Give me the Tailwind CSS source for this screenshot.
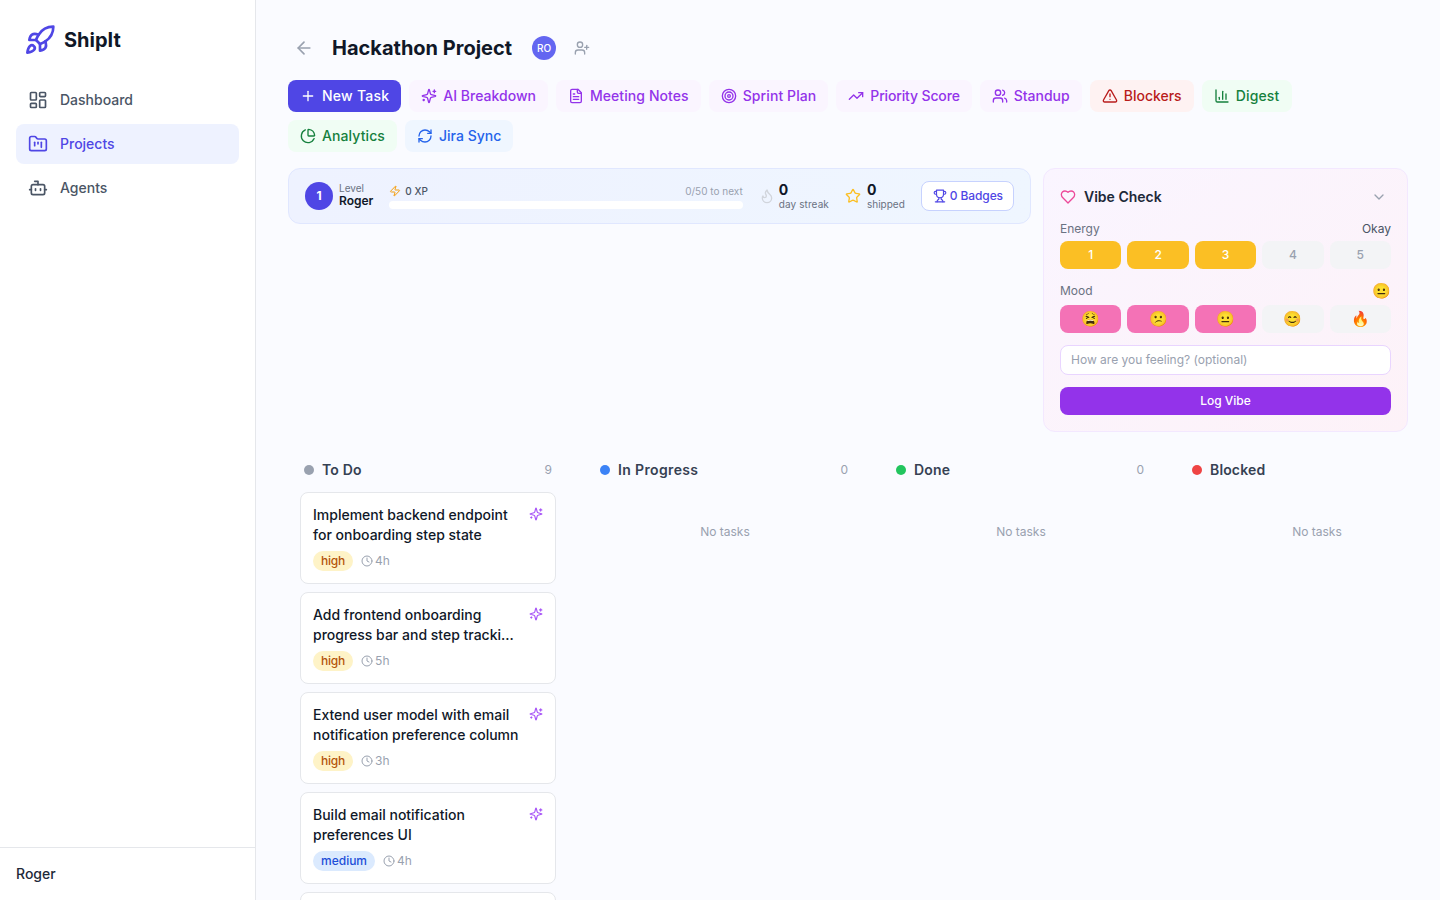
<!DOCTYPE html>
<html lang="en">
<head>
    <meta charset="UTF-8">
    <meta name="viewport" content="width=device-width, initial-scale=1.0">
    <title>ShipIt</title>
    <script src="https://cdn.jsdelivr.net/npm/@tailwindcss/browser@4"></script>
</head>
<body class="h-screen overflow-hidden bg-[#fafbff] text-gray-900 font-['Inter',sans-serif]">
    <svg class="hidden">
        <defs>
            <symbol id="i-sparkles" viewBox="0 0 24 24"><path d="M9.937 15.5A2 2 0 0 0 8.5 14.063l-6.135-1.582a.5.5 0 0 1 0-.962L8.5 9.936A2 2 0 0 0 9.937 8.5l1.582-6.135a.5.5 0 0 1 .963 0L14.063 8.5A2 2 0 0 0 15.5 9.937l6.135 1.581a.5.5 0 0 1 0 .964L15.5 14.063a2 2 0 0 0-1.437 1.437l-1.582 6.135a.5.5 0 0 1-.963 0z"/><path d="M20 3v4"/><path d="M22 5h-4"/><path d="M4 17v2"/><path d="M5 18H3"/></symbol>
            <symbol id="i-clock" viewBox="0 0 24 24"><circle cx="12" cy="12" r="10"/><polyline points="12 6 12 12 16 14"/></symbol>
        </defs>
    </svg>

    <div class="flex h-screen">
        <!-- Sidebar -->
        <aside class="w-64 shrink-0 bg-white border-r border-gray-200 flex flex-col">
            <div class="flex items-center gap-2 h-20 px-6">
                <svg class="w-8 h-8 text-[#4f46e5]" viewBox="0 0 24 24" fill="none" stroke="currentColor" stroke-width="2" stroke-linecap="round" stroke-linejoin="round"><path d="M4.5 16.5c-1.5 1.26-2 5-2 5s3.74-.5 5-2c.71-.84.7-2.13-.09-2.91a2.18 2.18 0 0 0-2.91-.09z"/><path d="m12 15-3-3a22 22 0 0 1 2-3.95A12.88 12.88 0 0 1 22 2c0 2.72-.78 7.5-6 11a22.35 22.35 0 0 1-4 2z"/><path d="M9 12H4s.55-3.03 2-4c1.62-1.08 5 0 5 0"/><path d="M12 15v5s3.03-.55 4-2c1.08-1.62 0-5 0-5"/></svg>
                <span class="text-xl font-bold">ShipIt</span>
            </div>
            <nav class="flex-1 px-4 flex flex-col gap-1">
                <a class="flex items-center gap-3 h-10 px-3 rounded-lg text-sm font-medium text-gray-600">
                    <svg class="w-5 h-5" viewBox="0 0 24 24" fill="none" stroke="currentColor" stroke-width="2" stroke-linecap="round" stroke-linejoin="round"><rect width="7" height="9" x="3" y="3" rx="1"/><rect width="7" height="5" x="14" y="3" rx="1"/><rect width="7" height="9" x="14" y="12" rx="1"/><rect width="7" height="5" x="3" y="16" rx="1"/></svg>
                    Dashboard
                </a>
                <a class="flex items-center gap-3 h-10 px-3 rounded-lg text-sm font-medium bg-[#eef2ff] text-[#4f46e5]">
                    <svg class="w-5 h-5" viewBox="0 0 24 24" fill="none" stroke="currentColor" stroke-width="2" stroke-linecap="round" stroke-linejoin="round"><path d="M4 20h16a2 2 0 0 0 2-2V8a2 2 0 0 0-2-2h-7.93a2 2 0 0 1-1.66-.9l-.82-1.2A2 2 0 0 0 7.93 3H4a2 2 0 0 0-2 2v13c0 1.1.9 2 2 2Z"/><path d="M8 10v4"/><path d="M12 10v2"/><path d="M16 10v6"/></svg>
                    Projects
                </a>
                <a class="flex items-center gap-3 h-10 px-3 rounded-lg text-sm font-medium text-gray-600">
                    <svg class="w-5 h-5" viewBox="0 0 24 24" fill="none" stroke="currentColor" stroke-width="2" stroke-linecap="round" stroke-linejoin="round"><path d="M12 8V4H8"/><rect width="16" height="12" x="4" y="8" rx="2"/><path d="M2 14h2"/><path d="M20 14h2"/><path d="M15 13v2"/><path d="M9 13v2"/></svg>
                    Agents
                </a>
            </nav>
            <div class="border-t border-gray-200 h-[53px] px-4 flex items-center text-sm font-medium text-gray-800">Roger</div>
        </aside>

        <!-- Main -->
        <main class="flex-1 min-w-0 overflow-hidden px-8 pt-8">
            <!-- Header -->
            <div class="flex items-center h-8 mb-4">
                <button class="p-1.5 text-gray-400">
                    <svg class="w-5 h-5" viewBox="0 0 24 24" fill="none" stroke="currentColor" stroke-width="2" stroke-linecap="round" stroke-linejoin="round"><path d="m12 19-7-7 7-7"/><path d="M19 12H5"/></svg>
                </button>
                <h1 class="ml-3 text-xl font-bold">Hackathon Project</h1>
                <div class="ml-5 w-6 h-6 rounded-full bg-[#6366f1] text-white text-[10px] font-medium flex items-center justify-center">RO</div>
                <button class="ml-[18px] text-gray-400">
                    <svg class="w-4 h-4" viewBox="0 0 24 24" fill="none" stroke="currentColor" stroke-width="2" stroke-linecap="round" stroke-linejoin="round"><path d="M16 21v-2a4 4 0 0 0-4-4H6a4 4 0 0 0-4 4v2"/><circle cx="9" cy="7" r="4"/><line x1="19" x2="19" y1="8" y2="14"/><line x1="22" x2="16" y1="11" y2="11"/></svg>
                </button>
            </div>

            <!-- Actions -->
            <div class="flex flex-col gap-2 mb-4">
                <div class="flex gap-2">
                    <button class="flex items-center gap-1.5 h-8 px-3 rounded-lg text-sm font-medium tracking-[0.25px] bg-[#4f46e5] text-white">
                        <svg class="w-4 h-4" viewBox="0 0 24 24" fill="none" stroke="currentColor" stroke-width="2" stroke-linecap="round" stroke-linejoin="round"><path d="M5 12h14"/><path d="M12 5v14"/></svg>
                        New Task
                    </button>
                    <button class="flex items-center gap-1.5 h-8 px-3 rounded-lg text-sm font-medium bg-[#faf5ff] text-[#9333ea]">
                        <svg class="w-4 h-4" fill="none" stroke="currentColor" stroke-width="2" stroke-linecap="round" stroke-linejoin="round"><use href="#i-sparkles"/></svg>
                        AI Breakdown
                    </button>
                    <button class="flex items-center gap-1.5 h-8 px-3 rounded-lg text-sm font-medium tracking-[0.08px] bg-[#faf5ff] text-[#9333ea]">
                        <svg class="w-4 h-4" viewBox="0 0 24 24" fill="none" stroke="currentColor" stroke-width="2" stroke-linecap="round" stroke-linejoin="round"><path d="M15 2H6a2 2 0 0 0-2 2v16a2 2 0 0 0 2 2h12a2 2 0 0 0 2-2V7Z"/><path d="M14 2v4a2 2 0 0 0 2 2h4"/><path d="M10 9H8"/><path d="M16 13H8"/><path d="M16 17H8"/></svg>
                        Meeting Notes
                    </button>
                    <button class="flex items-center gap-1.5 h-8 px-3 rounded-lg text-sm font-medium tracking-[0.09px] bg-[#faf5ff] text-[#9333ea]">
                        <svg class="w-4 h-4" viewBox="0 0 24 24" fill="none" stroke="currentColor" stroke-width="2" stroke-linecap="round" stroke-linejoin="round"><circle cx="12" cy="12" r="10"/><circle cx="12" cy="12" r="6"/><circle cx="12" cy="12" r="2"/></svg>
                        Sprint Plan
                    </button>
                    <button class="flex items-center gap-1.5 h-8 px-3 rounded-lg text-sm font-medium tracking-[-0.15px] bg-[#faf5ff] text-[#9333ea]">
                        <svg class="w-4 h-4" viewBox="0 0 24 24" fill="none" stroke="currentColor" stroke-width="2" stroke-linecap="round" stroke-linejoin="round"><polyline points="22 7 13.5 15.5 8.5 10.5 2 17"/><polyline points="16 7 22 7 22 13"/></svg>
                        Priority Score
                    </button>
                    <button class="flex items-center gap-1.5 h-8 px-3 rounded-lg text-sm font-medium bg-[#faf5ff] text-[#9333ea]">
                        <svg class="w-4 h-4" viewBox="0 0 24 24" fill="none" stroke="currentColor" stroke-width="2" stroke-linecap="round" stroke-linejoin="round"><path d="M16 21v-2a4 4 0 0 0-4-4H6a4 4 0 0 0-4 4v2"/><circle cx="9" cy="7" r="4"/><path d="M22 21v-2a4 4 0 0 0-3-3.87"/><path d="M16 3.13a4 4 0 0 1 0 7.75"/></svg>
                        Standup
                    </button>
                    <button class="flex items-center gap-1.5 h-8 px-3 rounded-lg text-sm font-medium bg-[#fef2f2] text-[#b91c1c]">
                        <svg class="w-4 h-4" viewBox="0 0 24 24" fill="none" stroke="currentColor" stroke-width="2" stroke-linecap="round" stroke-linejoin="round"><path d="m21.73 18-8-14a2 2 0 0 0-3.48 0l-8 14A2 2 0 0 0 4 21h16a2 2 0 0 0 1.73-3"/><path d="M12 9v4"/><path d="M12 17h.01"/></svg>
                        Blockers
                    </button>
                    <button class="flex items-center gap-1.5 h-8 px-3 rounded-lg text-sm font-medium tracking-[0.17px] bg-[#f0fdf4] text-[#15803d]">
                        <svg class="w-4 h-4" viewBox="0 0 24 24" fill="none" stroke="currentColor" stroke-width="2" stroke-linecap="round" stroke-linejoin="round"><path d="M3 3v16a2 2 0 0 0 2 2h16"/><path d="M18 17V9"/><path d="M13 17V5"/><path d="M8 17v-3"/></svg>
                        Digest
                    </button>
                </div>
                <div class="flex gap-2">
                    <button class="flex items-center gap-1.5 h-8 px-3 rounded-lg text-sm font-medium tracking-[0.1px] bg-[#f0fdf4] text-[#15803d]">
                        <svg class="w-4 h-4" viewBox="0 0 24 24" fill="none" stroke="currentColor" stroke-width="2" stroke-linecap="round" stroke-linejoin="round"><path d="M21 12c.552 0 1.005-.449.95-.998a10 10 0 0 0-8.953-8.951c-.55-.055-.998.398-.998.95v8a1 1 0 0 0 1 1z"/><path d="M21.21 15.89A10 10 0 1 1 8 2.83"/></svg>
                        Analytics
                    </button>
                    <button class="flex items-center gap-1.5 h-8 px-3 rounded-lg text-sm font-medium bg-[#eff6ff] text-[#2563eb]">
                        <svg class="w-4 h-4" viewBox="0 0 24 24" fill="none" stroke="currentColor" stroke-width="2" stroke-linecap="round" stroke-linejoin="round"><path d="M3 12a9 9 0 0 1 9-9 9.75 9.75 0 0 1 6.74 2.74L21 8"/><path d="M21 3v5h-5"/><path d="M21 12a9 9 0 0 1-9 9 9.75 9.75 0 0 1-6.74-2.74L3 16"/><path d="M8 16H3v5"/></svg>
                        Jira Sync
                    </button>
                </div>
            </div>

            <!-- Level bar + vibe check -->
            <div class="flex items-start gap-3 mb-4">
                <div class="flex-1 min-w-0 h-14 px-4 flex items-center gap-4 rounded-xl border border-[#e0e7ff] bg-linear-to-r from-[#eef2ff] to-[#eff6ff]">
                    <div class="flex items-center gap-1.5">
                        <div class="w-7 h-7 rounded-full bg-[#4f46e5] text-white text-xs font-bold flex items-center justify-center">1</div>
                        <div>
                            <div class="text-[10px] leading-3 text-gray-500 -mt-px">Level</div>
                            <div class="text-xs leading-4 font-semibold text-gray-900 -mt-px">Roger</div>
                        </div>
                    </div>
                    <div class="flex-1 min-w-0">
                        <div class="flex items-center justify-between mb-0.5">
                            <span class="flex items-center gap-1 text-[10px] leading-4 font-medium text-gray-600">
                                <svg class="w-3 h-3 text-[#f59e0b]" viewBox="0 0 24 24" fill="none" stroke="currentColor" stroke-width="2" stroke-linecap="round" stroke-linejoin="round"><path d="M4 14a1 1 0 0 1-.78-1.63l9.9-10.2a.5.5 0 0 1 .86.46l-1.92 6.02A1 1 0 0 0 13 10h7a1 1 0 0 1 .78 1.63l-9.9 10.2a.5.5 0 0 1-.86-.46l1.92-6.02A1 1 0 0 0 11 14z"/></svg>
                                0 XP
                            </span>
                            <span class="text-[10px] leading-4 text-gray-400">0/50 to next</span>
                        </div>
                        <div class="h-2 rounded-full bg-white"></div>
                    </div>
                    <div class="flex items-center gap-1">
                        <svg class="w-4 h-4 text-gray-300" viewBox="0 0 24 24" fill="none" stroke="currentColor" stroke-width="2" stroke-linecap="round" stroke-linejoin="round"><path d="M8.5 14.5A2.5 2.5 0 0 0 11 12c0-1.38-.5-2-1-3-1.072-2.143-.224-4.054 2-6 .5 2.5 2 4.9 4 6.5 2 1.6 3 3.5 3 5.5a7 7 0 1 1-14 0c0-1.153.433-2.294 1-3a2.5 2.5 0 0 0 2.5 2.5z"/></svg>
                        <div>
                            <div class="text-sm leading-4 font-bold text-gray-900">0</div>
                            <div class="text-[10px] leading-3 tracking-[0.1px] text-gray-500">day streak</div>
                        </div>
                    </div>
                    <div class="flex items-center gap-1.5">
                        <svg class="w-4 h-4 text-[#fbbf24]" viewBox="0 0 24 24" fill="none" stroke="currentColor" stroke-width="2" stroke-linecap="round" stroke-linejoin="round"><path d="M11.525 2.295a.53.53 0 0 1 .95 0l2.31 4.679a2.123 2.123 0 0 0 1.595 1.16l5.166.756a.53.53 0 0 1 .294.904l-3.736 3.638a2.123 2.123 0 0 0-.611 1.878l.882 5.14a.53.53 0 0 1-.771.56l-4.618-2.428a2.122 2.122 0 0 0-1.973 0L6.396 21.01a.53.53 0 0 1-.77-.56l.881-5.139a2.122 2.122 0 0 0-.611-1.879L2.16 9.795a.53.53 0 0 1 .294-.906l5.165-.755a2.122 2.122 0 0 0 1.597-1.16z"/></svg>
                        <div>
                            <div class="text-sm leading-4 font-bold text-gray-900">0</div>
                            <div class="text-[10px] leading-3 text-gray-500">shipped</div>
                        </div>
                    </div>
                    <button class="flex items-center gap-[3px] h-[30px] pl-[11px] pr-2.5 rounded-lg border border-[#c7d2fe] bg-white text-xs font-medium tracking-[-0.1px] text-[#4f46e5]">
                        <svg class="w-3.5 h-3.5" viewBox="0 0 24 24" fill="none" stroke="currentColor" stroke-width="2" stroke-linecap="round" stroke-linejoin="round"><path d="M6 9H4.5a2.5 2.5 0 0 1 0-5H6"/><path d="M18 9h1.5a2.5 2.5 0 0 0 0-5H18"/><path d="M4 22h16"/><path d="M10 14.66V17c0 .55-.47.98-.97 1.21C7.85 18.75 7 20.24 7 22"/><path d="M14 14.66V17c0 .55.47.98.97 1.21C16.15 18.75 17 20.24 17 22"/><path d="M18 2H6v7a6 6 0 0 0 12 0V2Z"/></svg>
                        0 Badges
                    </button>
                </div>

                <div class="w-[365px] shrink-0 p-4 rounded-xl border border-[#f3e8ff] bg-linear-to-br from-[#faf5ff] to-[#fdf2f8]">
                    <div class="flex items-center justify-between h-6 mb-3">
                        <div class="flex items-center gap-2 text-sm font-semibold text-gray-800">
                            <svg class="w-4 h-4 text-[#ec4899]" viewBox="0 0 24 24" fill="none" stroke="currentColor" stroke-width="2" stroke-linecap="round" stroke-linejoin="round"><path d="M19 14c1.49-1.46 3-3.21 3-5.5A5.5 5.5 0 0 0 16.5 3c-1.76 0-3 .5-4.5 2-1.5-1.5-2.74-2-4.5-2A5.5 5.5 0 0 0 2 8.5c0 2.3 1.5 4.05 3 5.5l7 7Z"/></svg>
                            Vibe Check
                        </div>
                        <svg class="w-4 h-4 text-gray-400 mr-1" viewBox="0 0 24 24" fill="none" stroke="currentColor" stroke-width="2" stroke-linecap="round" stroke-linejoin="round"><path d="m6 9 6 6 6-6"/></svg>
                    </div>
                    <div class="flex justify-between text-xs leading-4 mb-1">
                        <span class="text-gray-500">Energy</span>
                        <span class="text-gray-600">Okay</span>
                    </div>
                    <div class="flex gap-1.5 mb-3">
                        <div class="flex-1 h-7 rounded-lg bg-[#fbbf24] text-white text-xs font-medium flex items-center justify-center">1</div>
                        <div class="flex-1 h-7 rounded-lg bg-[#fbbf24] text-white text-xs font-medium flex items-center justify-center">2</div>
                        <div class="flex-1 h-7 rounded-lg bg-[#fbbf24] text-white text-xs font-medium flex items-center justify-center">3</div>
                        <div class="flex-1 h-7 rounded-lg bg-gray-100 text-gray-400 text-xs font-medium flex items-center justify-center">4</div>
                        <div class="flex-1 h-7 rounded-lg bg-gray-100 text-gray-400 text-xs font-medium flex items-center justify-center">5</div>
                    </div>
                    <div class="flex justify-between items-center h-5 text-xs mb-1">
                        <span class="text-gray-500">Mood</span>
                        <span class="text-[15px]">😐</span>
                    </div>
                    <div class="flex gap-1.5 mb-3">
                        <div class="flex-1 h-7 rounded-lg bg-[#f472b6] text-[15px] flex items-center justify-center">😫</div>
                        <div class="flex-1 h-7 rounded-lg bg-[#f472b6] text-[15px] flex items-center justify-center">😕</div>
                        <div class="flex-1 h-7 rounded-lg bg-[#f472b6] text-[15px] flex items-center justify-center">😐</div>
                        <div class="flex-1 h-7 rounded-lg bg-gray-100 text-[15px] flex items-center justify-center">😊</div>
                        <div class="flex-1 h-7 rounded-lg bg-gray-100 text-[15px] flex items-center justify-center">🔥</div>
                    </div>
                    <input type="text" placeholder="How are you feeling? (optional)" class="block w-full h-[30px] px-2.5 pb-0.5 mb-3 rounded-lg border border-[#e9d5ff] bg-white text-xs placeholder:text-gray-400">
                    <button class="block w-full h-7 rounded-lg bg-[#9333ea] text-white text-xs font-medium">Log Vibe</button>
                </div>
            </div>

            <!-- Board -->
            <div class="flex gap-4 overflow-hidden">
                <section class="w-[280px] shrink-0 p-3">
                    <div class="flex items-center gap-2 h-5 px-1 mb-3">
                        <span class="w-2.5 h-2.5 rounded-full bg-gray-400"></span>
                        <h2 class="text-sm font-semibold tracking-[0.2px] text-gray-700">To Do</h2>
                        <span class="ml-auto text-xs text-gray-400">9</span>
                    </div>
                    <div class="flex flex-col gap-2">
                        <article class="p-3 h-[92px] bg-white rounded-lg border border-gray-200">
                            <div class="flex justify-between gap-2">
                                <p class="text-sm leading-5 font-medium text-gray-900">Implement backend endpoint for onboarding step state</p>
                                <svg class="w-3.5 h-3.5 shrink-0 mt-0.5 text-[#a855f7]" fill="none" stroke="currentColor" stroke-width="2" stroke-linecap="round" stroke-linejoin="round"><use href="#i-sparkles"/></svg>
                            </div>
                            <div class="flex items-center gap-2 mt-1.5 text-xs">
                                <span class="px-2 h-5 leading-5 rounded-full bg-[#fef3c7] text-[#b45309] font-medium tracking-[-0.2px]">high</span>
                                <span class="flex items-center gap-0.5 text-gray-400"><svg class="w-3 h-3" fill="none" stroke="currentColor" stroke-width="2" stroke-linecap="round" stroke-linejoin="round"><use href="#i-clock"/></svg>4h</span>
                            </div>
                        </article>
                        <article class="p-3 h-[92px] bg-white rounded-lg border border-gray-200">
                            <div class="flex justify-between gap-2">
                                <p class="text-sm leading-5 font-medium text-gray-900">Add frontend onboarding progress bar and step tracki...</p>
                                <svg class="w-3.5 h-3.5 shrink-0 mt-0.5 text-[#a855f7]" fill="none" stroke="currentColor" stroke-width="2" stroke-linecap="round" stroke-linejoin="round"><use href="#i-sparkles"/></svg>
                            </div>
                            <div class="flex items-center gap-2 mt-1.5 text-xs">
                                <span class="px-2 h-5 leading-5 rounded-full bg-[#fef3c7] text-[#b45309] font-medium tracking-[-0.2px]">high</span>
                                <span class="flex items-center gap-0.5 text-gray-400"><svg class="w-3 h-3" fill="none" stroke="currentColor" stroke-width="2" stroke-linecap="round" stroke-linejoin="round"><use href="#i-clock"/></svg>5h</span>
                            </div>
                        </article>
                        <article class="p-3 h-[92px] bg-white rounded-lg border border-gray-200">
                            <div class="flex justify-between gap-2">
                                <p class="text-sm leading-5 font-medium text-gray-900">Extend user model with email notification preference column</p>
                                <svg class="w-3.5 h-3.5 shrink-0 mt-0.5 text-[#a855f7]" fill="none" stroke="currentColor" stroke-width="2" stroke-linecap="round" stroke-linejoin="round"><use href="#i-sparkles"/></svg>
                            </div>
                            <div class="flex items-center gap-2 mt-1.5 text-xs">
                                <span class="px-2 h-5 leading-5 rounded-full bg-[#fef3c7] text-[#b45309] font-medium tracking-[-0.2px]">high</span>
                                <span class="flex items-center gap-0.5 text-gray-400"><svg class="w-3 h-3" fill="none" stroke="currentColor" stroke-width="2" stroke-linecap="round" stroke-linejoin="round"><use href="#i-clock"/></svg>3h</span>
                            </div>
                        </article>
                        <article class="p-3 h-[92px] bg-white rounded-lg border border-gray-200">
                            <div class="flex justify-between gap-2">
                                <p class="text-sm leading-5 font-medium text-gray-900">Build email notification preferences UI</p>
                                <svg class="w-3.5 h-3.5 shrink-0 mt-0.5 text-[#a855f7]" fill="none" stroke="currentColor" stroke-width="2" stroke-linecap="round" stroke-linejoin="round"><use href="#i-sparkles"/></svg>
                            </div>
                            <div class="flex items-center gap-2 mt-1.5 text-xs">
                                <span class="px-2 h-5 leading-5 rounded-full bg-[#dbeafe] text-[#1d4ed8] font-medium">medium</span>
                                <span class="flex items-center gap-0.5 text-gray-400"><svg class="w-3 h-3" fill="none" stroke="currentColor" stroke-width="2" stroke-linecap="round" stroke-linejoin="round"><use href="#i-clock"/></svg>4h</span>
                            </div>
                        </article>
                        <article class="p-3 h-[92px] bg-white rounded-lg border border-gray-200"></article>
                    </div>
                </section>

                <section class="w-[280px] shrink-0 p-3">
                    <div class="flex items-center gap-2 h-5 px-1 mb-3">
                        <span class="w-2.5 h-2.5 rounded-full bg-[#3b82f6]"></span>
                        <h2 class="text-sm font-semibold tracking-[0.36px] text-gray-700">In Progress</h2>
                        <span class="ml-auto text-xs text-gray-400">0</span>
                    </div>
                    <p class="pt-8 pl-0.5 text-center text-xs leading-4 text-gray-400">No tasks</p>
                </section>

                <section class="w-[280px] shrink-0 p-3">
                    <div class="flex items-center gap-2 h-5 px-1 mb-3">
                        <span class="w-2.5 h-2.5 rounded-full bg-[#22c55e]"></span>
                        <h2 class="text-sm font-semibold tracking-[0.2px] text-gray-700">Done</h2>
                        <span class="ml-auto text-xs text-gray-400">0</span>
                    </div>
                    <p class="pt-8 pl-0.5 text-center text-xs leading-4 text-gray-400">No tasks</p>
                </section>

                <section class="w-[280px] shrink-0 p-3">
                    <div class="flex items-center gap-2 h-5 px-1 mb-3">
                        <span class="w-2.5 h-2.5 rounded-full bg-[#ef4444]"></span>
                        <h2 class="text-sm font-semibold tracking-[0.15px] text-gray-700">Blocked</h2>
                    </div>
                    <p class="pt-8 pl-0.5 text-center text-xs leading-4 text-gray-400">No tasks</p>
                </section>
            </div>
        </main>
    </div>
</body>
</html>
